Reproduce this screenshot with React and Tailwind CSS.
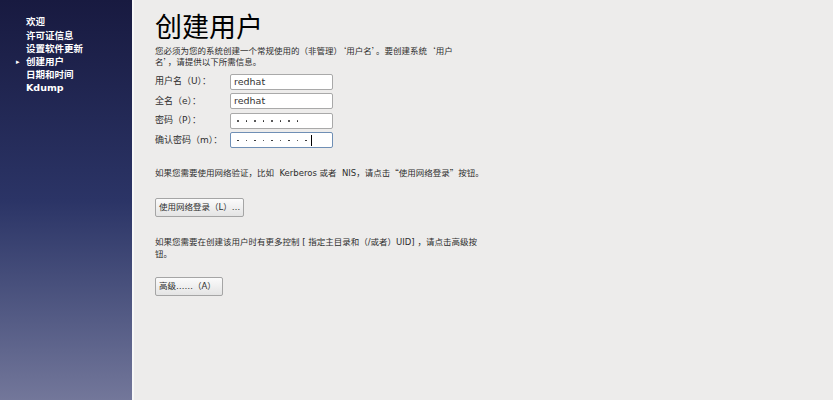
const font = { fontFamily: '"DejaVu Sans", "Noto Sans CJK SC", sans-serif' };
const cjk = { fontFamily: '"Noto Sans CJK SC", sans-serif' };

const steps = ['欢迎', '许可证信息', '设置软件更新', '创建用户', '日期和时间', 'Kdump'];

// quotes and brackets in the CJK face, so they take full width as in the original
function Q({ children }) {
  return <span className="leading-none" style={cjk}>{children}</span>;
}

function Field({ label, value, password, focused }) {
  return (
    <div className="flex items-center h-[19.5px]">
      <span className="w-[75px] text-[9px] text-[#2e2e2e]">{label}</span>
      <div
        className={`w-[103px] h-[16px] rounded-[2px] bg-white flex items-center px-[3px] text-[9.5px] text-[#333] border ${
          focused ? 'border-[#6f8fb5]' : 'border-[#a9a9a9]'
        }`}
      >
        {password ? (
          <span className="flex items-center gap-[7px] pl-[3px]">
            {Array.from({ length: value }).map((_, i) => (
              <span key={i} className="w-[1.5px] h-[1.5px] bg-[#222] rounded-full" />
            ))}
            {focused && <span className="w-px h-[11px] bg-black -ml-[3px]" />}
          </span>
        ) : (
          value
        )}
      </div>
    </div>
  );
}

export default function App() {
  return (
    <div className="flex w-[833px] h-[400px] overflow-hidden bg-[#edeceb]" style={font}>
      <div className="w-[132px] h-full bg-gradient-to-b from-[#181a40] via-[#2b3466] to-[#73779a] pt-[16px] pl-[16px]">
        {steps.map((s, i) => (
          <div key={s} className="flex items-center h-[13.2px] text-[9.5px] font-bold text-white">
            <span className="w-[10px] text-[7px]">{i === 3 ? '▸' : ''}</span>
            {s}
          </div>
        ))}
      </div>
      <div className="w-[2px] h-full bg-[#f7f7f7]" />
      <div className="flex-1 pl-[21px] pt-[11px] text-[#2e2e2e]">
        <h1 className="text-[27px] leading-[34px] text-black">创建用户</h1>
        <p className="mt-[1px] w-[310px] text-[8.5px] leading-[11px]">
          您必须为您的系统创建一个常规使用的<Q>（</Q>非管理<Q>）‘</Q>用户名<Q>’</Q>。要创建系统<Q>‘</Q>用户名<Q>’</Q>，请提供以下所需信息。
        </p>
        <div className="mt-[4px]">
          <Field label="用户名（U）：" value="redhat" />
          <Field label="全名（e）：" value="redhat" />
          <Field label="密码（P）：" value={8} password />
          <Field label="确认密码（m）：" value={9} password focused />
        </div>
        <p className="mt-[17px] text-[8.5px] leading-[12px]">
          如果您需要使用网络验证，比如&nbsp; Kerberos 或者&nbsp; NIS，请点击<Q>“</Q>使用网络登录<Q>”</Q>按钮。
        </p>
        <button className="mt-[19px] h-[19px] px-[3px] text-[8.5px] bg-gradient-to-b from-[#fbfbfb] to-[#e4e4e4] border border-[#a5a5a5] rounded-[2px] text-[#2e2e2e]">
          使用网络登录（L）…
        </button>
        <p className="mt-[19px] w-[330px] text-[8.5px] leading-[12px]">
          如果您需要在创建该用户时有更多控制 [ 指定主目录和（/或者）UID] ，请点击高级按钮。
        </p>
        <button className="mt-[17px] h-[19px] pl-[3px] pr-[6px] text-[8.5px] bg-gradient-to-b from-[#fbfbfb] to-[#e4e4e4] border border-[#a5a5a5] rounded-[2px] text-[#2e2e2e]">
          高级……<Q>（</Q>A<Q>）</Q>
        </button>
      </div>
    </div>
  );
}
